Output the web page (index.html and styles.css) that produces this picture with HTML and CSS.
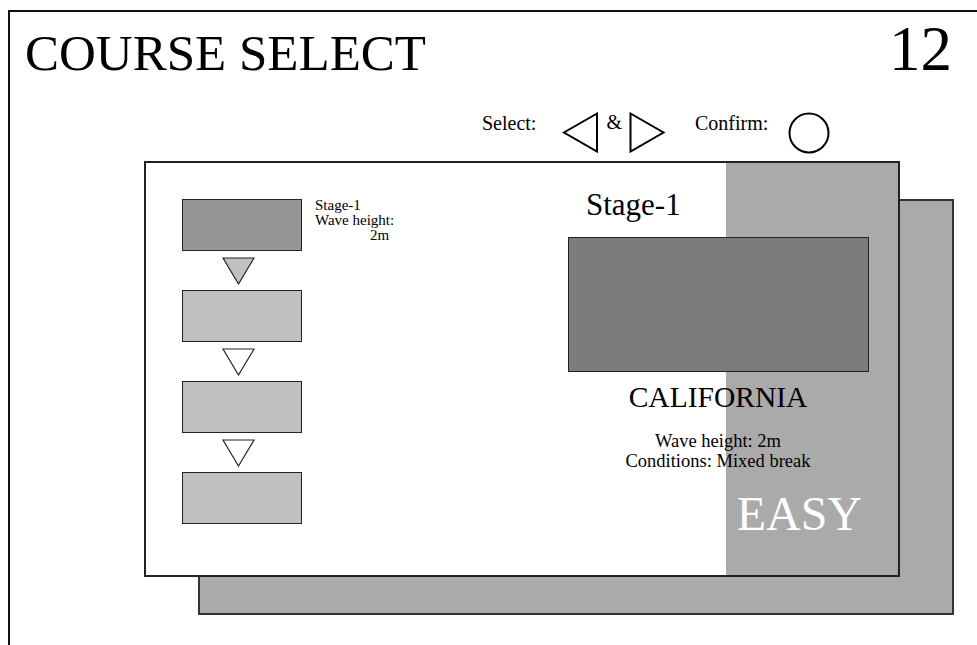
FILE: index.html
```html
<!DOCTYPE html>
<html>
<head>
<meta charset="utf-8">
<link rel="stylesheet" href="styles.css">
</head>
<body>
<div class="frame">
  <div class="header">
    <h1 class="title">COURSE SELECT</h1>
    <div class="count">12</div>
  </div>
  <div class="controls">
    <span class="ctl-label">Select:</span>
    <svg class="tri-left" width="37" height="41" viewBox="0 0 37 41"><polygon points="35,1.5 2,20.5 35,39.5" fill="none" stroke="#000" stroke-width="2"/></svg>
    <span class="amp">&amp;</span>
    <svg class="tri-right" width="37" height="41" viewBox="0 0 37 41"><polygon points="1.5,1.5 34.5,20.5 1.5,39.5" fill="none" stroke="#000" stroke-width="2"/></svg>
    <span class="ctl-label confirm">Confirm:</span>
    <svg class="circle" width="42" height="42" viewBox="0 0 42 42"><circle cx="21" cy="21" r="19.5" fill="none" stroke="#000" stroke-width="2"/></svg>
  </div>
  <div class="stack">
    <div class="back"></div>
    <div class="card">
      <div class="stages">
        <div class="stage-row">
          <div class="stage-box current"></div>
          <div class="stage-info">Stage-1<br>Wave height:<br><span class="indent">2m</span></div>
        </div>
        <svg class="arrow" width="33" height="28" viewBox="0 0 33 28"><polygon points="1,1 32,1 16.5,27" fill="#c0c0c0" stroke="#222" stroke-width="1.2"/></svg>
        <div class="stage-box"></div>
        <svg class="arrow" width="33" height="28" viewBox="0 0 33 28"><polygon points="1,1 32,1 16.5,27" fill="#fff" stroke="#222" stroke-width="1.2"/></svg>
        <div class="stage-box"></div>
        <svg class="arrow" width="33" height="28" viewBox="0 0 33 28"><polygon points="1,1 32,1 16.5,27" fill="#fff" stroke="#222" stroke-width="1.2"/></svg>
        <div class="stage-box"></div>
      </div>
      <div class="detail">
        <div class="detail-title">Stage-1</div>
        <div class="preview"></div>
        <div class="location">CALIFORNIA</div>
        <div class="desc">Wave height: 2m<br>Conditions: Mixed break</div>
        <div class="level">EASY</div>
      </div>
    </div>
  </div>
</div>
</body>
</html>
```
FILE: styles.css
```css
html, body {
  margin: 0;
  padding: 0;
  overflow: hidden;
  background: #fff;
}
body {
  width: 977px;
  height: 645px;
  font-family: "Liberation Serif", "Times New Roman", serif;
  color: #000;
}
.frame {
  margin: 10px 0 0 8px;
  border-top: 2px solid #111;
  border-left: 2px solid #111;
  width: 967px;
  height: 633px;
}
.header {
  display: flex;
  justify-content: space-between;
  align-items: baseline;
  width: 942px;
  box-sizing: border-box;
  padding-left: 15px;
  margin-top: 6px;
}
.title {
  margin: 0;
  font-weight: normal;
  font-size: 51px;
  line-height: 1;
}
.count {
  font-size: 63px;
  line-height: 1;
}
.controls {
  display: flex;
  align-items: flex-start;
  margin-top: 31px;
  margin-left: 472px;
  height: 42px;
}
.ctl-label {
  font-size: 20px;
  line-height: 20px;
  margin-top: 1px;
}
.tri-left {
  margin-left: 26px;
}
.amp {
  font-size: 20px;
  line-height: 20px;
  margin-left: 7px;
  margin-right: 7px;
}
.confirm {
  margin-left: 29px;
}
.circle {
  margin-left: 20px;
}
.stack {
  display: grid;
  margin-left: 134px;
  margin-top: 7px;
}
.back, .card {
  grid-area: 1 / 1;
  width: 756px;
  height: 416px;
  box-sizing: border-box;
  border: 2px solid #222;
}
.back {
  margin: 38px 0 0 54px;
  background: #aaa;
  border-color: #333;
}
.card {
  background: linear-gradient(to right, #fff 0, #fff 580px, #aaa 580px, #aaa 100%);
  display: grid;
  grid-template-columns: 394px 356px;
}
.stages {
  display: flex;
  flex-direction: column;
  align-items: flex-start;
  padding-top: 36px;
  padding-left: 36px;
}
.stage-row {
  display: flex;
  align-items: flex-start;
  gap: 13px;
}
.stage-box {
  width: 120px;
  height: 52px;
  box-sizing: border-box;
  border: 1px solid #222;
  background: #c0c0c0;
}
.stage-box.current {
  background: #969696;
}
.stage-info {
  font-size: 15px;
  line-height: 15px;
  margin-top: -1px;
}
.indent {
  padding-left: 55px;
}
.arrow {
  display: block;
  margin: 6px 0 5px 40px;
}
.detail {
  display: flex;
  flex-direction: column;
  align-items: center;
  padding-top: 26px;
}
.detail-title {
  align-self: flex-start;
  margin-left: 46px;
  font-size: 31px;
  line-height: 31px;
}
.preview {
  align-self: flex-start;
  margin-left: 28px;
  margin-top: 17px;
  width: 301px;
  height: 135px;
  box-sizing: border-box;
  border: 1px solid #222;
  background: #7c7c7c;
}
.location {
  margin-top: 10px;
  font-size: 29.5px;
  line-height: 30px;
}
.desc {
  margin-top: 19px;
  font-size: 18.5px;
  line-height: 20px;
  text-align: center;
}
.level {
  align-self: flex-end;
  margin-right: 34px;
  margin-top: 19px;
  font-size: 48px;
  line-height: 48px;
  color: #fff;
}
```
